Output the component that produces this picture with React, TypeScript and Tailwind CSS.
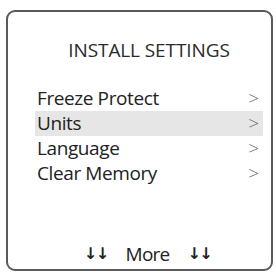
export default function App() {
  const items = [
    { label: 'Freeze Protect', active: false },
    { label: 'Units', active: true },
    { label: 'Language', active: false },
    { label: 'Clear Memory', active: false },
  ];

  return (
    <div
      className="w-[276px] h-[273px] bg-white pt-[10px] pl-[6px]"
      style={{ fontFamily: '"Open Sans", "Liberation Sans", sans-serif' }}
    >
      <div className="w-[267px] h-[261px] border-2 border-[#5a5a5a] rounded-[9px] flex flex-col">
        {/* title */}
        <div className="mt-[26px] pl-[19px] text-center text-[19px] leading-[24px] text-[#2a2a2a] tracking-[-0.1px]">
          INSTALL SETTINGS
        </div>

        {/* menu rows */}
        <div className="mt-[24px] ml-[27px] mr-[8px] flex flex-col">
          {items.map((item) => (
            <div
              key={item.label}
              className={`h-[25px] flex items-center justify-between pl-[2px] pr-[4px] ${
                item.active ? 'bg-[#e6e6e6]' : ''
              }`}
            >
              <span className="text-[19px] text-[#222] tracking-[-0.4px]">{item.label}</span>
              <span className="text-[19px] text-[#666] font-light">&gt;</span>
            </div>
          ))}
        </div>

        {/* footer */}
        <div className="mt-auto mb-[1px] pl-[16px] flex items-center justify-center gap-[18px] text-[#222]">
          <span className="text-[16px] font-bold tracking-[-1.5px]" style={{ fontFamily: '"DejaVu Sans", sans-serif' }}>
            ↓↓
          </span>
          <span className="text-[19px] tracking-[-0.8px]">More</span>
          <span className="text-[16px] font-bold tracking-[-1.5px]" style={{ fontFamily: '"DejaVu Sans", sans-serif' }}>
            ↓↓
          </span>
        </div>
      </div>
    </div>
  );
}
